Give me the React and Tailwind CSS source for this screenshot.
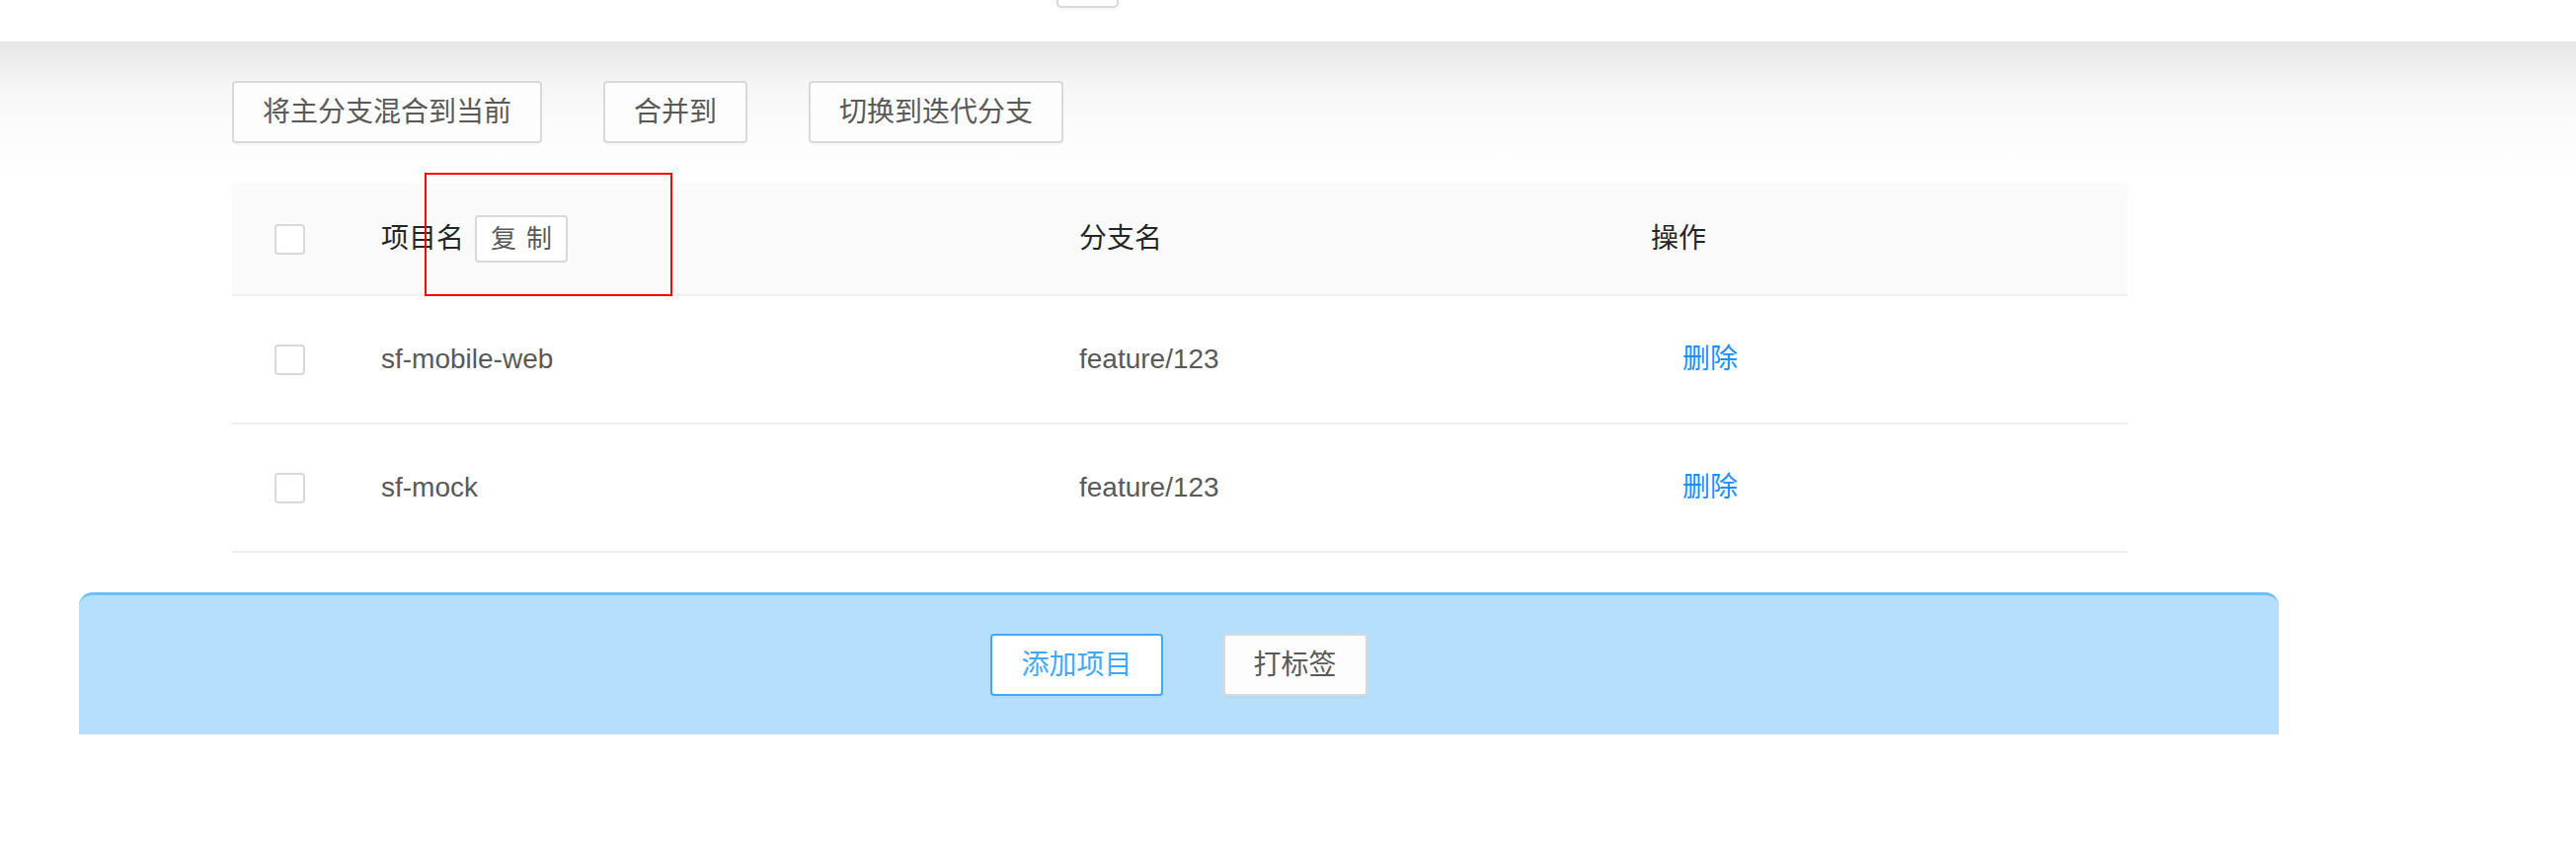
const rows = [
  { name: 'sf-mobile-web', branch: 'feature/123' },
  { name: 'sf-mock', branch: 'feature/123' },
];

function Btn({ children, primary }) {
  return (
    <button
      className={`h-[63px] px-[29px] border-2 rounded-[4px] text-[28px] leading-none whitespace-nowrap shadow-[0_3px_0_rgba(0,0,0,0.02)] ${
        primary ? 'border-[#40a9ff] text-[#40a9ff] bg-white' : 'border-[#d9d9d9] text-[#595959] bg-[#fdfdfd]'
      }`}
    >
      {children}
    </button>
  );
}

function Checkbox() {
  return <span className="block w-[31px] h-[31px] border-2 border-[#d9d9d9] rounded-[4px] bg-white" />;
}

export default function App() {
  return (
    <div
      className="w-[2609px] h-[854px] bg-white overflow-hidden"
      style={{ fontFamily: '"Liberation Sans", "Noto Sans CJK SC", sans-serif' }}
    >
      {/* top bar */}
      <div className="h-[42px] bg-white flex">
        <div className="ml-[1070px] w-[63px] h-[8px] border-2 border-t-0 border-[#d9d9d9] rounded-b-[5px] bg-white shadow-[0_3px_3px_rgba(0,0,0,0.03)]" />
      </div>

      <div className="bg-[linear-gradient(to_bottom,#e6e6e6_0px,#f4f4f4_40px,#fbfbfb_80px,#fefefe_120px,#ffffff_160px)]">
        <div className="pl-[235px] pt-[40px]">
          <div className="flex gap-[62px]">
            <Btn>将主分支混合到当前</Btn>
            <Btn>合并到</Btn>
            <Btn>切换到迭代分支</Btn>
          </div>

          {/* table */}
          <div className="relative mt-[41px] w-[1920px]">
            <div className="grid grid-cols-[151px_707px_579px_1fr] items-center h-[112px] bg-[#fafafa] border-b-2 border-[#f0f0f0] text-[28px] text-[#262626] box-content">
              <div className="pl-[43px]">
                <Checkbox />
              </div>
              <div className="flex items-center">
                <span>项目名</span>
                <span className="ml-[11px] h-[48px] px-[14px] flex items-center gap-[10px] border-2 border-[#d9d9d9] rounded-[4px] bg-white text-[26px] text-[#595959]">
                  <span>复</span>
                  <span>制</span>
                </span>
              </div>
              <div>分支名</div>
              <div>操作</div>
            </div>

            {rows.map((r) => (
              <div
                key={r.name}
                className="grid grid-cols-[151px_707px_579px_1fr] items-center h-[128px] border-b-2 border-[#f0f0f0] text-[28px] text-[#595959] box-content"
              >
                <div className="pl-[43px]">
                  <Checkbox />
                </div>
                <div>{r.name}</div>
                <div>{r.branch}</div>
                <div className="pl-[32px] text-[#1890ff]">删除</div>
              </div>
            ))}

            <div className="absolute left-[195px] top-[-11px] w-[251px] h-[125px] border-2 border-[#ff0000]" />
          </div>
        </div>
      </div>

      {/* footer action bar */}
      <div className="mt-[40px] ml-[80px] w-[2228px] h-[144px] border-t-[3px] border-[#69c0ff] rounded-t-[14px] bg-[#b5dffd] flex items-center justify-center gap-[61px]">
        <Btn primary>添加项目</Btn>
        <Btn>打标签</Btn>
      </div>
    </div>
  );
}
